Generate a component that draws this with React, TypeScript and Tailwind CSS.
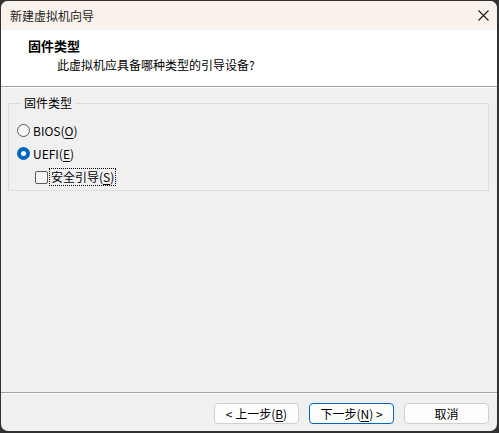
import React from "react";

const font = { fontFamily: '"Noto Sans CJK SC", "Noto Sans", sans-serif' };

function U({ children }: { children: React.ReactNode }) {
  return <span className="underline underline-offset-2">{children}</span>;
}

export default function App() {
  return (
    <div
      className="w-[499px] h-[433px] bg-[#323232] pt-[1px] pl-[1px] pr-[2px] pb-[2px] text-[12px] text-[#1a1a1a]"
      style={font}
    >
      <div className="w-full h-full rounded-[7px] overflow-hidden flex flex-col bg-[#f0f0f0]">
        {/* Title bar */}
        <div className="h-[29px] shrink-0 bg-[#f9f1eb] flex items-center justify-between pl-[9px] pr-[9px]">
          <span className="leading-[16px] text-[#1b1b1b]">新建虚拟机向导</span>
          <svg width="11" height="11" viewBox="0 0 11 11" className="mr-[-1px]">
            <path d="M0.5 0.5 L10.5 10.5 M10.5 0.5 L0.5 10.5" stroke="#1b1b1b" strokeWidth="1.1" />
          </svg>
        </div>
        {/* Header */}
        <div className="h-[56px] shrink-0 bg-white flex flex-col pt-[8px]">
          <div className="pl-[27px] font-bold text-[13px] leading-[16px] text-black">固件类型</div>
          <div className="pl-[56px] mt-[3px] leading-[16px] text-black">此虚拟机应具备哪种类型的引导设备?</div>
        </div>
        <div className="h-[1px] shrink-0 bg-[#a0a0a0]" />
        <div className="h-[1px] shrink-0 bg-white" />
        {/* Body */}
        <div className="flex-1 flex flex-col">
          <fieldset className="mt-[7px] ml-[7px] mr-[8px] border border-[#dcdcdc] pl-[8px] pt-[8px] pb-[1px]">
            <legend className="ml-[5px] px-[2px] leading-[16px] text-black">固件类型</legend>
            <div className="h-[23px] flex items-center">
              <span className="w-[13px] h-[13px] rounded-full border border-[#5a5a5a] bg-[#f5f5f5] box-border" />
              <span className="ml-[3px] leading-[16px] text-black">
                BIOS(<U>O</U>)
              </span>
            </div>
            <div className="h-[23px] flex items-center">
              <span className="w-[13px] h-[13px] rounded-full bg-[#0067c0] flex items-center justify-center">
                <span className="w-[5px] h-[5px] rounded-full bg-white" />
              </span>
              <span className="ml-[3px] leading-[16px] text-black">
                UEFI(<U>E</U>)
              </span>
            </div>
            <div className="h-[24px] flex items-center pl-[18px]">
              <span className="w-[13px] h-[13px] rounded-[2px] border border-[#5a5a5a] bg-[#f5f5f5] box-border" />
              <span className="ml-[1px] border border-dotted border-black px-[1px] leading-[16px] text-black">
                安全引导(<U>S</U>)
              </span>
            </div>
          </fieldset>
        </div>
        <div className="h-[1px] shrink-0 bg-[#a0a0a0]" />
        <div className="h-[1px] shrink-0 bg-white" />
        {/* Footer */}
        <div className="h-[37px] shrink-0 flex justify-end items-start pt-[9px] pr-[8px] gap-[10px]">
          <button className="w-[85px] h-[21px] rounded-[4px] border border-[#d0d0d0] bg-[#fdfdfd] leading-[16px] text-black flex items-center justify-center">
            &lt; 上一步(<U>B</U>)
          </button>
          <button className="w-[85px] h-[21px] rounded-[4px] border border-[#0067c0] bg-[#fdfdfd] leading-[16px] text-black flex items-center justify-center">
            下一步(<U>N</U>) &gt;
          </button>
          <button className="w-[85px] h-[21px] rounded-[4px] border border-[#d0d0d0] bg-[#fdfdfd] leading-[16px] text-black flex items-center justify-center">
            取消
          </button>
        </div>
      </div>
    </div>
  );
}
